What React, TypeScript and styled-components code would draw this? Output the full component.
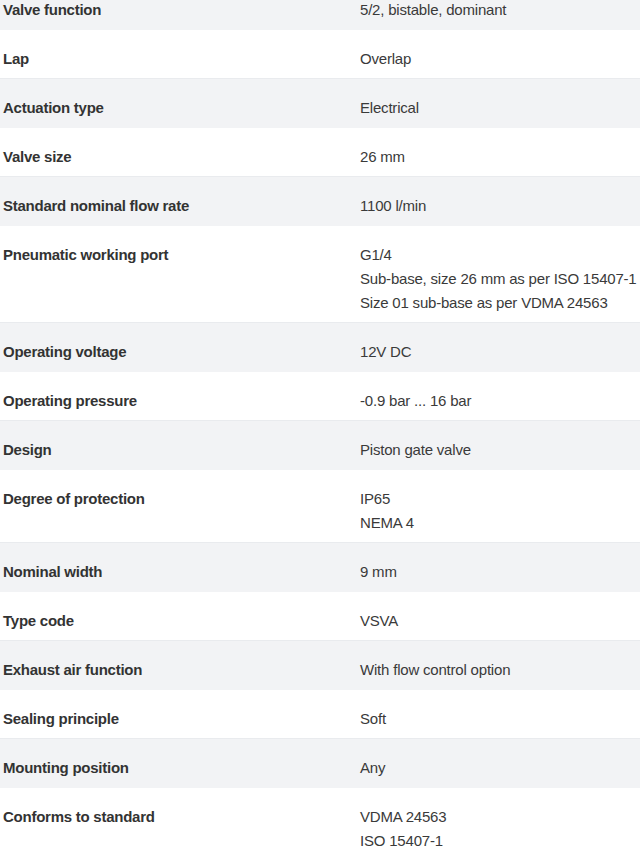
import React from "react";
import styled, { createGlobalStyle } from "styled-components";

const Global = createGlobalStyle`
  html, body { margin: 0; padding: 0; background: #ffffff; }
  body { font-family: "Liberation Sans", Arial, sans-serif; color: #333333; }
`;

const Table = styled.div`
  display: flex;
  flex-direction: column;
  margin-top: -19px;
`;

const Row = styled.div<{ $shaded: boolean }>`
  display: grid;
  grid-template-columns: 357px 1fr;
  box-sizing: border-box;
  padding: 17px 0 7px 3px;
  background: ${(p) => (p.$shaded ? "#f2f3f5" : "#ffffff")};
  border-bottom: 1px solid ${(p) => (p.$shaded ? "#f2f3f5" : "#e9ebee")};
  font-size: 15px;
  line-height: 24px;
`;

const Label = styled.div`
  font-weight: 700;
  color: #333333;
  letter-spacing: -0.25px;
`;

const Values = styled.div`
  display: flex;
  flex-direction: column;
  color: #3a3a3a;
  white-space: nowrap;
  letter-spacing: -0.2px;
`;

const rows: [string, string[]][] = [
  ["Valve function", ["5/2, bistable, dominant"]],
  ["Lap", ["Overlap"]],
  ["Actuation type", ["Electrical"]],
  ["Valve size", ["26 mm"]],
  ["Standard nominal flow rate", ["1100 l/min"]],
  [
    "Pneumatic working port",
    ["G1/4", "Sub-base, size 26 mm as per ISO 15407-1", "Size 01 sub-base as per VDMA 24563"],
  ],
  ["Operating voltage", ["12V DC"]],
  ["Operating pressure", ["-0.9 bar ... 16 bar"]],
  ["Design", ["Piston gate valve"]],
  ["Degree of protection", ["IP65", "NEMA 4"]],
  ["Nominal width", ["9 mm"]],
  ["Type code", ["VSVA"]],
  ["Exhaust air function", ["With flow control option"]],
  ["Sealing principle", ["Soft"]],
  ["Mounting position", ["Any"]],
  ["Conforms to standard", ["VDMA 24563", "ISO 15407-1"]],
];

export default function App() {
  return (
    <>
      <Global />
      <Table>
        {rows.map(([label, values], i) => (
          <Row key={label} $shaded={i % 2 === 0}>
            <Label>{label}</Label>
            <Values>
              {values.map((v) => (
                <span key={v}>{v}</span>
              ))}
            </Values>
          </Row>
        ))}
      </Table>
    </>
  );
}
